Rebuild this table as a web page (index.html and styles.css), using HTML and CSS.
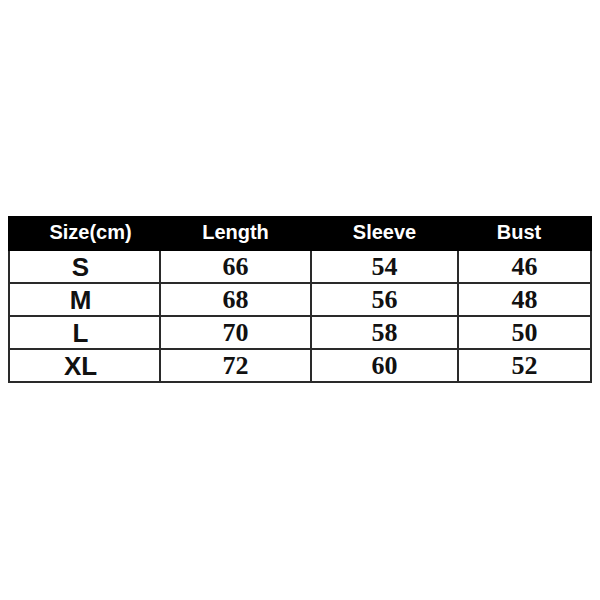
FILE: index.html
```html
<!DOCTYPE html>
<html>
<head>
<meta charset="utf-8">
<link rel="stylesheet" href="styles.css">
</head>
<body>
<div class="page">
  <table class="sizes">
    <colgroup>
      <col class="c1"><col class="c2"><col class="c3"><col class="c4">
    </colgroup>
    <thead>
      <tr class="head"><th class="first">Size(cm)</th><th>Length</th><th>Sleeve</th><th class="last">Bust</th></tr>
    </thead>
    <tbody>
      <tr class="row"><td class="sz">S</td><td>66</td><td>54</td><td>46</td></tr>
      <tr class="row"><td class="sz">M</td><td>68</td><td>56</td><td>48</td></tr>
      <tr class="row"><td class="sz">L</td><td>70</td><td>58</td><td>50</td></tr>
      <tr class="row"><td class="sz">XL</td><td>72</td><td>60</td><td>52</td></tr>
    </tbody>
  </table>
</div>
</body>
</html>
```
FILE: styles.css
```css
html, body { margin: 0; padding: 0; background: #fff; }
.page { padding: 216px 0 0 8px; width: 600px; height: 600px; box-sizing: border-box; }
.sizes { border-collapse: collapse; table-layout: fixed; width: 582px; }
.c1 { width: 151px; }
.c2 { width: 151px; }
.c3 { width: 147px; }
.c4 { width: 133px; }
.head { height: 33px; }
.row { height: 33px; }
.sizes th {
  background: #000; color: #fff;
  font-family: "Liberation Sans", Arial, sans-serif; font-weight: bold; font-size: 20px;
  padding: 0 0 4px 0; text-align: center; border: 2px solid #000; line-height: 24px;
}
.sizes th.first { padding-left: 12px; }
.sizes th.last { padding-right: 11px; }
.sizes td {
  border: 2px solid #2a2a2a; padding: 0; text-align: center;
  font-family: "Liberation Serif", "Times New Roman", serif; font-weight: bold; font-size: 26px; color: #111;
  line-height: 28px;
}
.sizes td.sz { font-family: "Liberation Sans", Arial, sans-serif; font-size: 26px; padding-right: 8px; }
```
